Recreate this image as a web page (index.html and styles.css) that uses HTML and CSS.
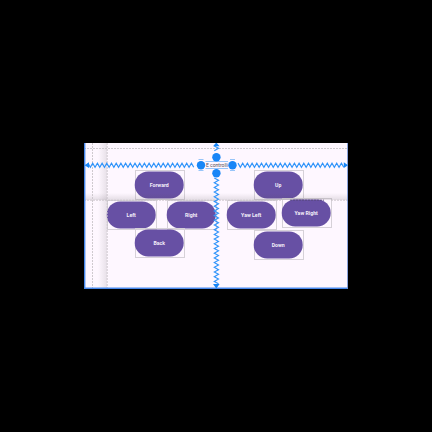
FILE: index.html
```
<!DOCTYPE html>
<html lang="en">
<head>
<meta charset="utf-8">
<title>Layout editor</title>
<link rel="stylesheet" href="styles.css">
</head>
<body>
<main class="surface">
  <div class="shade shade-v"></div>
  <div class="node forward"><span class="pill">Forward</span></div>
  <div class="node left"><span class="pill">Left</span></div>
  <div class="node right"><span class="pill">Right</span></div>
  <div class="node back"><span class="pill">Back</span></div>
  <div class="node up"><span class="pill">Up</span></div>
  <div class="node yaw-left"><span class="pill">Yaw Left</span></div>
  <div class="node yaw-right"><span class="pill">Yaw Right</span></div>
  <div class="node down"><span class="pill">Down</span></div>
  <div class="shade shade-h"></div>
  <span class="label">E controlli</span>
  <svg class="overlay" viewBox="84 143 264 146" width="264" height="146">
    <g class="guides">
      <path d="M84 148.5H348M84 200.2H282M331 200.2H348M92.5 143V289M107.2 143V289"/>
      <path class="faint" d="M290 200.2H324"/>
    </g>
    <path class="zig" data-axis="x" data-from="88" data-to="196" data-at="165.2"/>
    <path class="zig" data-axis="x" data-from="238" data-to="344" data-at="165.2"/>
    <path class="zig" data-axis="y" data-from="146" data-to="153" data-at="216.4"/>
    <path class="zig" data-axis="y" data-from="178" data-to="284" data-at="216.4"/>
    <path class="edge" d="M84.7 143V288.3H347.6"/>
    <path class="edge-right" d="M347.6 143V289"/>
    <path class="solid" d="M84.5 165.2L89 162.3V168.1ZM348 165.2L343.8 162.3V168.1ZM216.3 142.5L213 146.2H219.6ZM216.3 288.5L213 284H219.6Z"/>
    <path class="bounds" d="M205.5 161.5H228M205.5 168.5H228M198.5 159.5H203.5M198.5 170.5H203.5M230 159.5H235M230 170.5H235"/>
    <g class="solid">
      <circle cx="216.4" cy="157.2" r="4.2"/>
      <circle cx="216.4" cy="173.2" r="4.2"/>
      <circle cx="201" cy="165.2" r="4.2"/>
      <circle cx="232.5" cy="165.2" r="4.2"/>
    </g>
  </svg>
</main>
<script src="springs.js"></script>
</body>
</html>
```
FILE: springs.js
```
// Draws each constraint spring as a zigzag along its axis.
document.querySelectorAll(".zig").forEach((path) => {
  const { axis, from, to, at } = path.dataset;
  const step = 2.35;
  const points = [];
  for (let p = Number(from), i = 0; p <= Number(to); p += step, i++) {
    const side = Number(at) + (i % 2 ? 2.1 : -2.1);
    points.push(axis === "x" ? `${p} ${side}` : `${side} ${p}`);
  }
  path.setAttribute("d", "M" + points.join("L"));
});
```
FILE: styles.css
```
body {
  margin: 0;
  background: #000;
  font-family: Roboto, sans-serif;
}

.surface {
  position: relative;
  width: 264px;
  height: 146px;
  margin: 143px 0 0 84px;
  background: #fef7ff;
  overflow: hidden;
}

/* Widgets on the design canvas */
.node {
  position: absolute;
  box-sizing: border-box;
  width: 50px;
  height: 30px;
  border: 1px solid #d6d1d8;
}

.pill {
  display: flex;
  align-items: center;
  justify-content: center;
  width: 49px;
  height: 27px;
  margin-left: -1px;
  border-radius: 13.5px;
  background: #6750a4;
  color: #f4effa;
  font-size: 5.2px;
  font-weight: 700;
  white-space: nowrap;
  transform: translate(-0.3px, 0.4px);
}

.forward { left: 51px; top: 27px; }
.left { left: 23px; top: 57px; }
.right { left: 83px; top: 57px; }
.back { left: 51px; top: 85px; }
.up { left: 170px; top: 27px; }
.yaw-left { left: 143px; top: 57px; }
.yaw-right { left: 198px; top: 55px; }
.down { left: 170px; top: 87px; }

.label {
  position: absolute;
  left: 121.5px;
  top: 18px;
  width: 23px;
  color: #544e59;
  font-size: 5px;
  line-height: 8px;
  text-align: center;
  white-space: nowrap;
}

.shade { position: absolute; }

.shade-v {
  left: 14px;
  top: 0;
  width: 9px;
  height: 146px;
  background: linear-gradient(to right, transparent, rgba(80, 70, 80, 0.13));
}

.shade-h {
  left: 0;
  top: 50px;
  width: 264px;
  height: 7px;
  background: linear-gradient(to bottom, transparent, rgba(80, 70, 80, 0.15));
}

.overlay {
  position: absolute;
  left: 0;
  top: 0;
}

.guides {
  fill: none;
  stroke: #c9c4ca;
  stroke-width: 0.9;
  stroke-dasharray: 2 1;
}

.faint {
  stroke: #57477f;
}

.zig {
  fill: none;
  stroke: #3094fa;
  stroke-width: 1.15;
}

.edge {
  fill: none;
  stroke: #4688ec;
  stroke-width: 1.4;
}

.edge-right {
  fill: none;
  stroke: #5d83cf;
  stroke-width: 0.8;
}

.bounds {
  fill: none;
  stroke: #7cb8f8;
  stroke-width: 0.8;
}

.solid { fill: #1886f7; }
```
